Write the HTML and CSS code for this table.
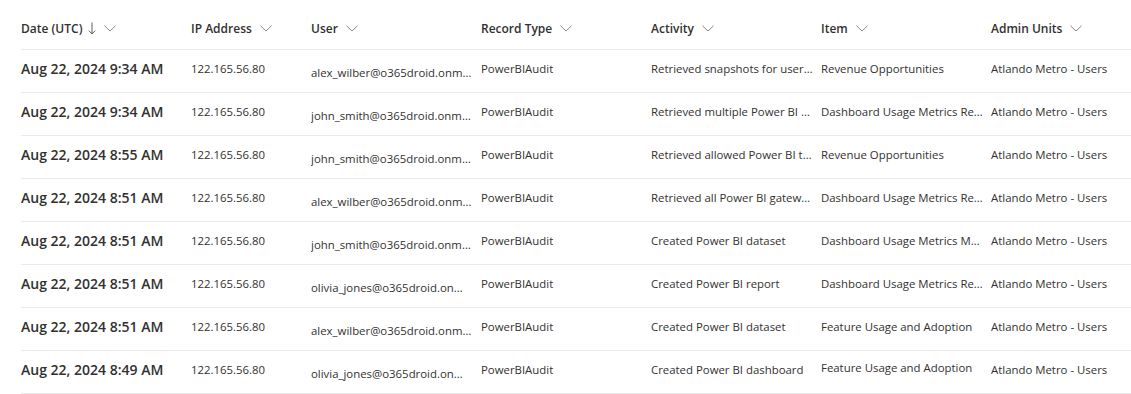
FILE: index.html
```html
<!DOCTYPE html>
<html lang="en">
  <head>
    <meta charset="UTF-8" />
    <title>Audit log</title>
    <link rel="stylesheet" href="styles.css">
  </head>
  <body>
    <div class="grid">
      <!-- HEADER -->
      <div class="row head">
        <div class="cell">Date (UTC)
          <svg class="sort" width="8" height="13" viewBox="0 0 8 13"><path d="M4 0.5V12M0.8 8.6L4 12L7.2 8.6" fill="none" stroke="#605e5c" stroke-width="1"/></svg>
          <svg class="chev" width="12" height="7" viewBox="0 0 12 7"><path d="M0.5 0.8L6 6L11.5 0.8" fill="none" stroke="#8a8886" stroke-width="1"/></svg>
        </div>
        <div class="cell">IP Address <svg class="chev" width="12" height="7" viewBox="0 0 12 7"><path d="M0.5 0.8L6 6L11.5 0.8" fill="none" stroke="#8a8886" stroke-width="1"/></svg></div>
        <div class="cell">User <svg class="chev" width="12" height="7" viewBox="0 0 12 7"><path d="M0.5 0.8L6 6L11.5 0.8" fill="none" stroke="#8a8886" stroke-width="1"/></svg></div>
        <div class="cell">Record Type <svg class="chev" width="12" height="7" viewBox="0 0 12 7"><path d="M0.5 0.8L6 6L11.5 0.8" fill="none" stroke="#8a8886" stroke-width="1"/></svg></div>
        <div class="cell">Activity <svg class="chev" width="12" height="7" viewBox="0 0 12 7"><path d="M0.5 0.8L6 6L11.5 0.8" fill="none" stroke="#8a8886" stroke-width="1"/></svg></div>
        <div class="cell">Item <svg class="chev" width="12" height="7" viewBox="0 0 12 7"><path d="M0.5 0.8L6 6L11.5 0.8" fill="none" stroke="#8a8886" stroke-width="1"/></svg></div>
        <div class="cell">Admin Units <svg class="chev" width="12" height="7" viewBox="0 0 12 7"><path d="M0.5 0.8L6 6L11.5 0.8" fill="none" stroke="#8a8886" stroke-width="1"/></svg></div>
      </div>

      <div class="row">
        <div class="cell date">Aug 22, 2024 9:34 AM</div>
        <div class="cell">122.165.56.80</div>
        <div class="cell user">alex_wilber@o365droid.onmicrosoft.com</div>
        <div class="cell">PowerBIAudit</div>
        <div class="cell">Retrieved snapshots for user dashboards</div>
        <div class="cell">Revenue Opportunities</div>
        <div class="cell">Atlando Metro - Users</div>
      </div>
      <div class="row">
        <div class="cell date">Aug 22, 2024 9:34 AM</div>
        <div class="cell">122.165.56.80</div>
        <div class="cell user">john_smith@o365droid.onmicrosoft.com</div>
        <div class="cell">PowerBIAudit</div>
        <div class="cell">Retrieved multiple Power BI reports</div>
        <div class="cell">Dashboard Usage Metrics Report</div>
        <div class="cell">Atlando Metro - Users</div>
      </div>
      <div class="row">
        <div class="cell date">Aug 22, 2024 8:55 AM</div>
        <div class="cell">122.165.56.80</div>
        <div class="cell user">john_smith@o365droid.onmicrosoft.com</div>
        <div class="cell">PowerBIAudit</div>
        <div class="cell">Retrieved allowed Power BI tenants</div>
        <div class="cell">Revenue Opportunities</div>
        <div class="cell">Atlando Metro - Users</div>
      </div>
      <div class="row">
        <div class="cell date">Aug 22, 2024 8:51 AM</div>
        <div class="cell">122.165.56.80</div>
        <div class="cell user">alex_wilber@o365droid.onmicrosoft.com</div>
        <div class="cell">PowerBIAudit</div>
        <div class="cell">Retrieved all Power BI gateways</div>
        <div class="cell">Dashboard Usage Metrics Report</div>
        <div class="cell">Atlando Metro - Users</div>
      </div>
      <div class="row">
        <div class="cell date">Aug 22, 2024 8:51 AM</div>
        <div class="cell">122.165.56.80</div>
        <div class="cell user">john_smith@o365droid.onmicrosoft.com</div>
        <div class="cell">PowerBIAudit</div>
        <div class="cell">Created Power BI dataset</div>
        <div class="cell">Dashboard Usage Metrics Model</div>
        <div class="cell">Atlando Metro - Users</div>
      </div>
      <div class="row">
        <div class="cell date">Aug 22, 2024 8:51 AM</div>
        <div class="cell">122.165.56.80</div>
        <div class="cell user">olivia_jones@o365droid.onmicrosoft.com</div>
        <div class="cell">PowerBIAudit</div>
        <div class="cell">Created Power BI report</div>
        <div class="cell">Dashboard Usage Metrics Report</div>
        <div class="cell">Atlando Metro - Users</div>
      </div>
      <div class="row">
        <div class="cell date">Aug 22, 2024 8:51 AM</div>
        <div class="cell">122.165.56.80</div>
        <div class="cell user">alex_wilber@o365droid.onmicrosoft.com</div>
        <div class="cell">PowerBIAudit</div>
        <div class="cell">Created Power BI dataset</div>
        <div class="cell">Feature Usage and Adoption</div>
        <div class="cell">Atlando Metro - Users</div>
      </div>
      <div class="row">
        <div class="cell date">Aug 22, 2024 8:49 AM</div>
        <div class="cell">122.165.56.80</div>
        <div class="cell user">olivia_jones@o365droid.onmicrosoft.com</div>
        <div class="cell">PowerBIAudit</div>
        <div class="cell">Created Power BI dashboard</div>
        <div class="cell up">Feature Usage and Adoption</div>
        <div class="cell">Atlando Metro - Users</div>
      </div>
    </div>
  </body>
</html>
```

FILE: styles.css
```css
* {
  box-sizing: border-box;
}

body {
  margin: 0;
  padding: 0;
  background: #fff;
  font-family: "Open Sans", "Noto Sans", sans-serif;
  color: #323130;
}

.grid {
  margin-left: 21px;
}

.row {
  display: grid;
  grid-template-columns: 170px 120px 170px 170px 170px 170px 1fr;
  height: 43px;
  align-items: center;
  border-bottom: 1px solid #edebe9;
  font-size: 11.4px;
}

.row.head {
  height: 50px;
  padding-top: 14px;
  font-size: 12px;
  font-weight: 600;
}

.cell {
  white-space: nowrap;
  overflow: hidden;
  text-overflow: ellipsis;
  padding-right: 8px;
  margin-top: -6px;
}

.head .cell {
  display: flex;
  align-items: center;
  overflow: visible;
}

.sort {
  margin-left: 6px;
}

.chev {
  margin-left: 8px;
}

.date {
  font-size: 14px;
  font-weight: 600;
}

.user {
  margin-top: 3px;
}

.up {
  margin-top: -10px;
}
```
